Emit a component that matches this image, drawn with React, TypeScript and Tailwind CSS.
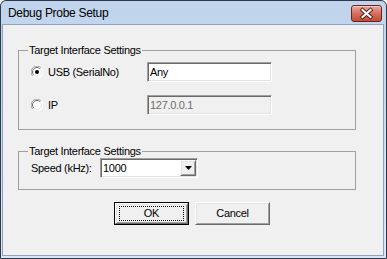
import React from "react";

const sunken =
  "border border-t-[#a0a0a0] border-l-[#a0a0a0] border-b-white border-r-white shadow-[inset_1px_1px_0_#696969,inset_-1px_-1px_0_#e3e3e3]";
const raised =
  "border border-t-white border-l-white border-b-[#696969] border-r-[#696969] shadow-[inset_1px_1px_0_#e3e3e3,inset_-1px_-1px_0_#a0a0a0]";

function Radio({ checked }: { checked?: boolean }) {
  return (
    <svg width="12" height="12" viewBox="0 0 12 12" className="shrink-0">
      <circle cx="6" cy="6" r="5.5" fill="#fff" />
      <path d="M10.2 1.8 A5.5 5.5 0 0 0 1.8 10.2" stroke="#a0a0a0" fill="none" />
      <path d="M9.2 2.8 A4.5 4.5 0 0 0 2.8 9.2" stroke="#696969" fill="none" />
      <path d="M1.8 10.2 A5.5 5.5 0 0 0 10.2 1.8" stroke="#fff" fill="none" />
      <path d="M2.8 9.2 A4.5 4.5 0 0 0 9.2 2.8" stroke="#e3e3e3" fill="none" />
      {checked && <circle cx="6" cy="6" r="2" fill="#000" />}
    </svg>
  );
}

// group box with caption sitting on the top border
function Group({ title, className, children }: { title: string; className: string; children: React.ReactNode }) {
  return (
    <div className={`relative w-[338px] border border-[#a0a0a0] ${className}`}>
      <span className="absolute left-[9px] top-[-7px] bg-[#f0f0f0] px-[1px] leading-[13px]">{title}</span>
      {children}
    </div>
  );
}

export default function App() {
  return (
    <div className="w-[387px] h-[259px] bg-white font-['Liberation_Sans',Arial,sans-serif] text-[11px] tracking-[-0.3px] text-black">
      <div className="flex h-full flex-col rounded-t-[6px] border border-[#2e3a4b] bg-gradient-to-b from-[#bfd4ec] to-[#d9e6f4]">
        <div className="flex h-[23px] shrink-0 items-center justify-between pl-[7px] pr-[4px]">
          <span className="text-[12px] leading-[14px] tracking-[-0.3px] text-black">Debug Probe Setup</span>
          <div className="mt-[1px] h-[17px] w-[31px] rounded-[3px] border border-[#6d2219] bg-gradient-to-b from-[#e9a99c] via-[#d5705f] to-[#c34a36] shadow-[inset_0_1px_0_#f4cfc6]">
            <svg width="29" height="15" viewBox="0 0 29 15">
              <path d="M10.5 4 L18.5 11 M18.5 4 L10.5 11" stroke="#5a1c14" strokeWidth="4" strokeLinecap="square" />
              <path d="M10.5 4 L18.5 11 M18.5 4 L10.5 11" stroke="#fff" strokeWidth="2.2" strokeLinecap="square" />
            </svg>
          </div>
        </div>
        <div className="ml-[1px] mr-[2px] mb-[2px] flex-1 border border-[#8ea4bd] bg-[#f0f0f0] pl-[15px] pt-[25px]">
          <Group title="Target Interface Settings" className="h-[80px] pt-[11px]">
            <div className="grid grid-cols-[116px_125px] items-center gap-y-[13px] pl-[12px]">
              <div className="flex items-center gap-[5px]">
                <Radio checked />
                <span>USB (SerialNo)</span>
              </div>
              <div className={`flex h-[20px] items-center bg-white pl-[2px] ${sunken}`}>Any</div>
              <div className="flex items-center gap-[5px]">
                <Radio />
                <span>IP</span>
              </div>
              <div className={`flex h-[20px] items-center bg-[#f0f0f0] pl-[2px] text-[#6d6d6d] ${sunken}`}>127.0.0.1</div>
            </div>
          </Group>
          <Group title="Target Interface Settings" className="mt-[21px] h-[39px] pt-[6px]">
            <div className="flex h-[20px] items-center pl-[12px]">
              <span className="w-[69px]">Speed (kHz):</span>
              <div className={`flex h-[20px] w-[98px] items-center justify-between bg-white pl-[2px] pr-[1px] ${sunken}`}>
                <span>1000</span>
                <div className={`flex h-[16px] w-[16px] items-center justify-center bg-[#f0f0f0] ${raised}`}>
                  <svg width="7" height="4" viewBox="0 0 7 4">
                    <path d="M0 0 H7 L3.5 4 Z" fill="#000" />
                  </svg>
                </div>
              </div>
            </div>
          </Group>
          <div className="mt-[12px] flex gap-[6px] pl-[96px]">
            <div className="h-[23px] w-[75px] border border-black">
              <div className={`flex h-full w-full items-center justify-center bg-[#f0f0f0] ${raised}`}>
                <div className="flex h-[15px] w-[65px] items-center justify-center border border-dotted border-black">OK</div>
              </div>
            </div>
            <div className={`flex h-[23px] w-[75px] items-center justify-center bg-[#f0f0f0] ${raised}`}>Cancel</div>
          </div>
        </div>
      </div>
    </div>
  );
}
